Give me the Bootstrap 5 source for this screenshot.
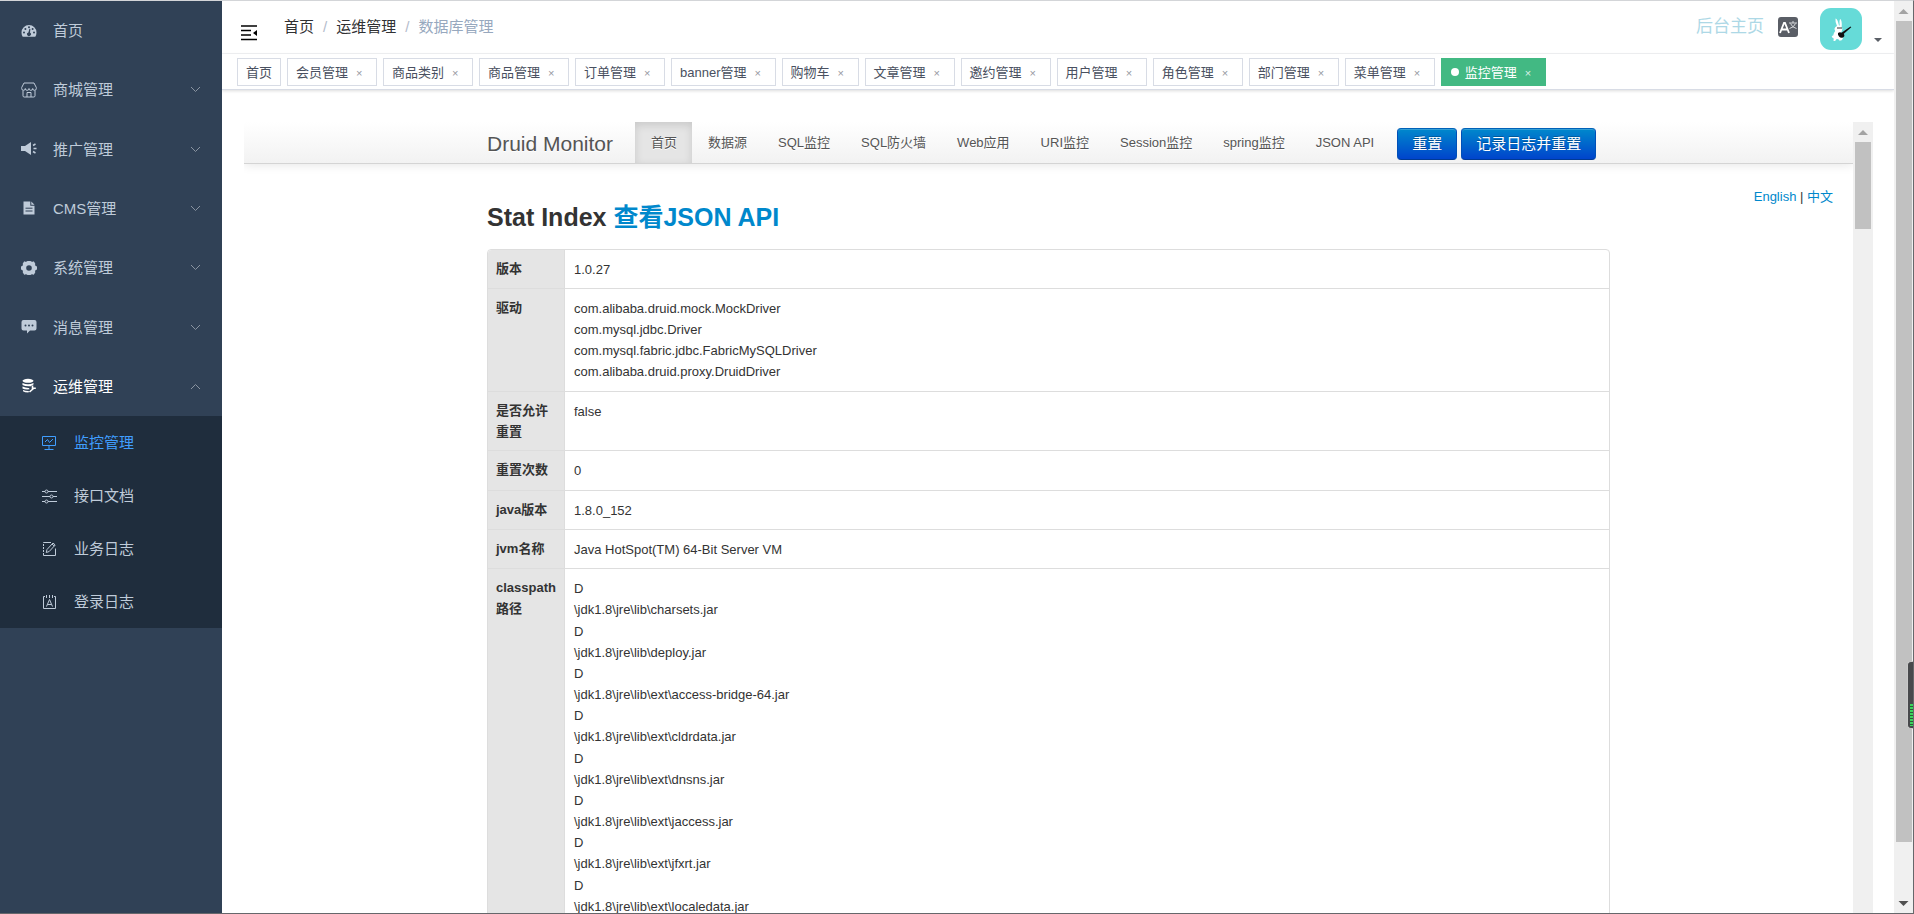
<!DOCTYPE html>
<html lang="zh-CN">
<head>
<meta charset="utf-8">
<meta name="viewport" content="width=device-width, initial-scale=1">
<title>监控管理</title>
<link href="https://cdn.jsdelivr.net/npm/bootstrap@5.3.0/dist/css/bootstrap.min.css" rel="stylesheet">
<style>
body{font-family:"Liberation Sans","Noto Sans CJK SC",sans-serif;font-size:13px;line-height:21px;color:#333;background:#fff}
a{text-decoration:none;color:#08c}
svg{display:block;flex:none}
.window-frame{border-top:1px solid #d3d5d8;border-right:1px solid #66676b;border-bottom:1px solid #66676b}
/* sidebar */
.side{width:222px;background:#304156;font-size:15px}
.side-main{display:grid;grid-template-rows:repeat(7,1fr);height:415px}
.side a{color:#bfcbd9;padding-left:21px;padding-right:21px}
.side a .ico{width:16px;margin-right:16px}
.side a.open{color:#fff}
.side .arrow{margin-left:auto;color:#8a94a1}
.side-sub{background:#1f2d3d}
.side-sub a{height:53px;padding-left:41px}
.side-sub a .ico{margin-right:17px}
.side-sub a.active{color:#409eff}
/* top bar */
.topbar{height:53px;border-bottom:1px solid #f2f3f5;padding-left:18px;padding-right:8px}
.toggle{margin-top:12px;margin-right:26px}
.crumbs{font-size:15px;padding-bottom:2px;--bs-breadcrumb-divider:"/";--bs-breadcrumb-divider-color:#b4bccc}
.crumbs a{color:#303133}
.crumbs .breadcrumb-item+.breadcrumb-item{padding-left:9px}
.crumbs .breadcrumb-item+.breadcrumb-item::before{padding-right:9px}
.crumbs .breadcrumb-item.active{color:#97a8be}
.home-link{font-size:17px;color:#add8e6;margin-right:14px;padding-bottom:2px}
.lang-btn{margin-right:22px}
.user-btn{padding-top:4px}
/* tags */
.tagbar{height:36px;padding:4px 15px 0;gap:6px;border-bottom:1px solid #d8dce5;box-shadow:0 1px 3px rgba(0,0,0,.14)}
.tag-item{height:28px;border:1px solid #d8dce5;color:#495060;padding:0 8px;white-space:nowrap}
.tag-item .x{width:20px;padding-left:8px;font-size:11px;color:#96999f;padding-top:2px}
.tag-item.active{background:#42b983;border-color:#42b983;color:#fff}
.tag-item.active .x{color:#d9f1e6}
.tag-item .dot{width:8px;height:8px;background:#fff;border-radius:50%;margin:0 6px 0 1px}
/* embedded monitor */
.stage{padding:32px 21px 0 22px;min-height:0}
.d-bar{height:42px;background:linear-gradient(#fff,#f2f2f2);border-bottom:1px solid #d4d4d4;box-shadow:0 1px 10px rgba(0,0,0,.1)}
.d-wrap{max-width:1123px;margin:0 auto}
.d-brand{font-size:21px;line-height:43px;height:41px;color:#555;text-shadow:0 1px 0 #fff;padding-right:22px}
.d-nav a{color:#555;text-shadow:0 1px 0 #fff;padding:0 15px 0 16px;line-height:41px;height:41px;display:block}
.d-nav a.active{background:#e5e5e5;box-shadow:inset 0 3px 8px rgba(0,0,0,.125)}
.d-actions{padding:6px 0 0 8px}
.d-btn{font-size:15px;line-height:20px;color:#fff;padding:5px 14px;border:1px solid;border-color:#0062b8 #0050b8 #003a94;border-radius:4px;background:linear-gradient(#08c,#04c);text-shadow:0 -1px 0 rgba(0,0,0,.25);box-shadow:inset 0 1px 0 rgba(255,255,255,.2)}
.d-content{padding-top:22px}
.d-lang{float:right;margin-right:20px}
.d-title{font-size:25px;line-height:26px;font-weight:700;margin:0 0 19px;padding-top:18px;color:#333}
.d-table{width:100%;border:1px solid #ddd;border-collapse:separate;border-spacing:0;border-radius:4px;table-layout:fixed}
.d-table th{width:77px;background:#e5e5e5;border-right:1px solid #ddd;font-weight:700}
.d-table td{padding:9px 9px 8px;vertical-align:top}
.d-table th{padding:8px;vertical-align:top}
.d-table .tall td{padding-bottom:9px}
.d-table tr+tr>*{border-top:1px solid #ddd}
.d-table tr:first-child th{border-top-left-radius:4px}
.paths li:nth-child(3n+1){margin-bottom:1px}
/* scroll rails */
.rail{width:20px;background:#f0f0f0;flex:none}
.rail .thumb{width:16px;background:#c1c1c1}
.rail-page{width:19px}
.gauge{right:0;top:660px;width:6px;height:68px;background:#48494c;border:1px solid #c9c9c9;border-right:0;border-radius:4px 0 0 4px;padding:42px 0 2px 2px}
.gauge i{display:block;height:100%;background:repeating-linear-gradient(#3bd45c 0 2px,#2d5a38 2px 3px)}
</style>
</head>
<body class="vh-100 overflow-hidden">
<div class="window-frame d-flex h-100 position-relative">

<nav class="side flex-shrink-0" aria-label="主菜单">
  <div class="side-main">
    <a href="#" class="d-flex align-items-center"><svg class="ico" width="16" height="16" viewBox="0 0 16 16"><path fill="currentColor" d="M8 2a7.5 7.5 0 0 0-7.5 7.500q0 2.500 1.200 4.300h12.600q1.200-1.800 1.200-4.300A7.500 7.500 0 0 0 8 2z"/><g fill="#304156"><circle cx="3" cy="9.500" r="1"/><circle cx="4.400" cy="6" r="1"/><circle cx="8" cy="4.300" r="1"/><circle cx="11.600" cy="6" r="1"/><circle cx="13" cy="9.500" r="1"/><path d="M8.400 5.800l1 .2-.4 3.600a1.900 1.900 0 1 1-1.600-.2z"/></g></svg>首页</a>
    <a href="#" class="d-flex align-items-center"><svg class="ico" width="16" height="16" viewBox="0 0 16 16" fill="none" stroke="currentColor"><path d="M3 1h10l2.300 4.500v1a1.800 1.800 0 0 1-3.600 0 1.800 1.800 0 0 1-3.700 0 1.800 1.800 0 0 1-3.700 0 1.800 1.800 0 0 1-3.600 0v-1zM2 8.500v5.300q0 1.200 1.200 1.200h9.600q1.200 0 1.200-1.200V8.500M6 15v-4.500h4V15"/></svg>商城管理<svg class="arrow" width="11" height="11" viewBox="0 0 11 11" fill="none" stroke="currentColor"><path d="M1 3l4.500 4.500L10 3"/></svg></a>
    <a href="#" class="d-flex align-items-center"><svg class="ico" width="16" height="16" viewBox="0 0 16 16"><path fill="currentColor" d="M0 5h4l6-4v13l-6-4H0z"/><path d="M12 4.500l2.500-1.500M12.500 7.500H15.500M12 10.500l2.500 1.500" stroke="currentColor" stroke-width="1.500"/></svg>推广管理<svg class="arrow" width="11" height="11" viewBox="0 0 11 11" fill="none" stroke="currentColor"><path d="M1 3l4.500 4.500L10 3"/></svg></a>
    <a href="#" class="d-flex align-items-center"><svg class="ico" width="16" height="16" viewBox="0 0 16 16"><path fill="currentColor" d="M2.500 1.500h6.800v4.200h4.200V14.500h-11zM10.300 1.500l3.200 3.200h-3.200z"/><path d="M4.500 8.200h7M4.500 11h7" stroke="#304156"/></svg>CMS管理<svg class="arrow" width="11" height="11" viewBox="0 0 11 11" fill="none" stroke="currentColor"><path d="M1 3l4.500 4.500L10 3"/></svg></a>
    <a href="#" class="d-flex align-items-center"><svg class="ico" width="16" height="16" viewBox="0 0 16 16"><path fill="currentColor" fill-rule="evenodd" d="M3.200 1.200q2 1.200 3.300-.2h3q1.300 1.400 3.300.2l1.500 2.600q-.9 2 1.700 2.800v2.800q-2.600.8-1.700 2.800l-1.500 2.600q-2-1.200-3.300.2h-3q-1.300-1.400-3.300-.2l-1.500-2.600q.9-2-1.700-2.800V6.600q2.600-.8 1.700-2.800zM8 5.200a2.800 2.800 0 1 0 0 5.600 2.800 2.800 0 0 0 0-5.600z"/></svg>系统管理<svg class="arrow" width="11" height="11" viewBox="0 0 11 11" fill="none" stroke="currentColor"><path d="M1 3l4.500 4.500L10 3"/></svg></a>
    <a href="#" class="d-flex align-items-center"><svg class="ico" width="16" height="16" viewBox="0 0 16 16"><path fill="currentColor" d="M2.500 1h11q2 0 2 2v6.500q0 2-2 2H9l-3 3v-3H2.500q-2 0-2-2V3q0-2 2-2z"/><g fill="#304156"><circle cx="4.500" cy="6.500" r="1"/><circle cx="8" cy="6.500" r="1"/><circle cx="11.500" cy="6.500" r="1"/></g></svg>消息管理<svg class="arrow" width="11" height="11" viewBox="0 0 11 11" fill="none" stroke="currentColor"><path d="M1 3l4.500 4.500L10 3"/></svg></a>
    <a href="#" class="open d-flex align-items-center"><svg class="ico" width="16" height="16" viewBox="0 0 16 16"><g fill="currentColor"><ellipse cx="7" cy="2.800" rx="5.500" ry="2"/><path d="M1.500 5q5.500 2.500 11 0v1.400q-2 .6-2.500 1.800-6 .3-8.500-1.300zM1.500 8.600q3 1.400 6.500 1.300l.6 1.400q-4.600.5-7.100-.9zM2 12q3 1.200 6 1l-.5 1.400q-4 0-5.500-1.200z"/></g><path d="M8.500 14l4-3.500M11.500 7.500v2.800h3.300" fill="none" stroke="currentColor" stroke-width="1.600"/></svg>运维管理<svg class="arrow" width="11" height="11" viewBox="0 0 11 11" fill="none" stroke="currentColor"><path d="M1 8l4.500-4.500L10 8"/></svg></a>
  </div>
  <div class="side-sub">
    <a href="#" class="active d-flex align-items-center"><svg class="ico" width="16" height="16" viewBox="0 0 16 16" fill="none" stroke="currentColor"><path d="M1.500 1.500h13v9h-13zM8 10.500v3.500M3.500 14.500h9M4 7l2.500-2.500L8.500 7.500 12 4"/></svg>监控管理</a>
    <a href="#" class="d-flex align-items-center"><svg class="ico" width="16" height="16" viewBox="0 0 16 16" fill="none" stroke="currentColor"><path d="M1 3.500h3M7 3.500h9M1 8.500h8M12 8.500h4M1 13.500h3M7 13.500h9"/><circle cx="5.500" cy="3.500" r="1.500"/><circle cx="10.500" cy="8.500" r="1.500"/><circle cx="5.500" cy="13.500" r="1.500"/></svg>接口文档</a>
    <a href="#" class="d-flex align-items-center"><svg class="ico" width="16" height="16" viewBox="0 0 16 16" fill="none" stroke="currentColor"><path d="M10 1.500H2.500v13h12V7.500" /><path d="M2.500 2v12" stroke="#1f2d3d" stroke-dasharray="1 2"/><path d="M6 8.500l6-6.500 2.200 2-6 6.500-3 1zM11 3l2.200 2"/></svg>业务日志</a>
    <a href="#" class="d-flex align-items-center"><svg class="ico" width="16" height="16" viewBox="0 0 16 16" fill="none" stroke="currentColor"><path d="M4 2.500H2.500v12h12v-12H13M5.500 1v3M8.500 1v3M11.500 1v3M5.500 12.500l3-7 3 7M6.500 10.500h4"/></svg>登录日志</a>
  </div>
</nav>

<div class="flex-fill d-flex flex-column overflow-hidden">
  <header class="topbar d-flex align-items-center flex-shrink-0">
    <button type="button" class="toggle btn p-0 border-0" aria-label="折叠菜单"><svg width="18" height="16" viewBox="0 0 18 16"><path d="M1 1h16M1 5.500h10M1 10h10M1 14.500h16" stroke="#000" stroke-width="1.500"/><path d="M17 5v6l-4-3z"/></svg></button>
    <ol class="crumbs breadcrumb mb-0">
      <li class="breadcrumb-item"><a href="#">首页</a></li>
      <li class="breadcrumb-item"><a href="#">运维管理</a></li>
      <li class="breadcrumb-item active">数据库管理</li>
    </ol>
    <a href="#" class="home-link ms-auto">后台主页</a>
    <button type="button" class="lang-btn btn p-0 border-0" aria-label="语言"><svg width="20" height="20" viewBox="0 0 20 20"><rect width="20" height="20" rx="3" fill="#5a5e66"/><path d="M2 16L6 6h1l4 10M3.500 12.500h6" fill="none" stroke="#fff" stroke-width="1.800"/><path d="M11 6h8M15 4v2M12.500 6.500q1.500 4 6 5M17.500 6.500q-1.500 4-6 5" fill="none" stroke="#d5d7da"/></svg></button>
    <button type="button" class="user-btn btn px-0 pb-0 border-0 d-flex align-items-end" aria-label="用户">
      <svg width="42" height="42" viewBox="0 0 42 42"><rect width="42" height="42" rx="11" fill="#66dbd8"/><path d="M15.500 10.500q2 0 3.500 7h.8q-.8-5 .4-6.500 2 1.500 1.500 8 1.500 2 0 4.500l-1 1q3 3 2 6.500l-1.500 1.500h-2l-1-1.500-2 .2-1 1.800h-1.700l.2-2.500q-2-1-2-2.500l1.500-.5q.5-3 2-4.500-2-3 1.800-5-2-3.500-1.500-7.500z" fill="#fff"/><path d="M17 20h5" stroke="#333"/><path d="M18 25q2-1.500 3.500-.2l9-6.300.8.700-7.500 6.600q1.500 2.600-.8 3.700-2.500.8-4-1-1.500-1.700-1-3.500z" fill="#111"/></svg>
      <svg class="ms-2" width="16" height="16" viewBox="0 0 16 16"><path d="M4 4h8L8 8z" fill="#5a5e66"/></svg>
    </button>
  </header>

  <div class="tagbar d-flex flex-shrink-0">
    <a href="#" class="tag-item d-flex align-items-center">首页</a>
    <a href="#" class="tag-item d-flex align-items-center">会员管理<span class="x">×</span></a>
    <a href="#" class="tag-item d-flex align-items-center">商品类别<span class="x">×</span></a>
    <a href="#" class="tag-item d-flex align-items-center">商品管理<span class="x">×</span></a>
    <a href="#" class="tag-item d-flex align-items-center">订单管理<span class="x">×</span></a>
    <a href="#" class="tag-item d-flex align-items-center">banner管理<span class="x">×</span></a>
    <a href="#" class="tag-item d-flex align-items-center">购物车<span class="x">×</span></a>
    <a href="#" class="tag-item d-flex align-items-center">文章管理<span class="x">×</span></a>
    <a href="#" class="tag-item d-flex align-items-center">邀约管理<span class="x">×</span></a>
    <a href="#" class="tag-item d-flex align-items-center">用户管理<span class="x">×</span></a>
    <a href="#" class="tag-item d-flex align-items-center">角色管理<span class="x">×</span></a>
    <a href="#" class="tag-item d-flex align-items-center">部门管理<span class="x">×</span></a>
    <a href="#" class="tag-item d-flex align-items-center">菜单管理<span class="x">×</span></a>
    <a href="#" class="tag-item active d-flex align-items-center"><span class="dot"></span>监控管理<span class="x">×</span></a>
  </div>

  <main class="stage flex-fill d-flex">
    <div class="flex-fill overflow-hidden">
      <div class="d-bar">
        <div class="d-wrap d-flex align-items-start">
          <a href="#" class="d-brand">Druid Monitor</a>
          <nav class="d-nav d-flex">
            <a href="#" class="active">首页</a>
            <a href="#">数据源</a>
            <a href="#">SQL监控</a>
            <a href="#">SQL防火墙</a>
            <a href="#">Web应用</a>
            <a href="#">URI监控</a>
            <a href="#">Session监控</a>
            <a href="#">spring监控</a>
            <a href="#">JSON API</a>
          </nav>
          <div class="d-actions d-flex gap-1">
            <button type="button" class="d-btn">重置</button>
            <button type="button" class="d-btn">记录日志并重置</button>
          </div>
        </div>
      </div>
      <div class="d-content">
        <div class="d-lang"><a href="#">English</a> | <a href="#">中文</a></div>
        <div class="d-wrap">
          <h3 class="d-title">Stat Index <a href="#">查看JSON API</a></h3>
          <table class="d-table">
            <tbody>
            <tr><th scope="row">版本</th><td>1.0.27</td></tr>
            <tr class="tall"><th scope="row">驱动</th><td>com.alibaba.druid.mock.MockDriver<br>com.mysql.jdbc.Driver<br>com.mysql.fabric.jdbc.FabricMySQLDriver<br>com.alibaba.druid.proxy.DruidDriver</td></tr>
            <tr class="tall"><th scope="row">是否允许重置</th><td>false</td></tr>
            <tr class="tall"><th scope="row">重置次数</th><td>0</td></tr>
            <tr><th scope="row">java版本</th><td>1.8.0_152</td></tr>
            <tr><th scope="row">jvm名称</th><td>Java HotSpot(TM) 64-Bit Server VM</td></tr>
            <tr><th scope="row">classpath路径</th><td><ul class="paths list-unstyled mb-0">
              <li>D<br>\jdk1.8\jre\lib\charsets.jar</li>
              <li>D<br>\jdk1.8\jre\lib\deploy.jar</li>
              <li>D<br>\jdk1.8\jre\lib\ext\access-bridge-64.jar</li>
              <li>D<br>\jdk1.8\jre\lib\ext\cldrdata.jar</li>
              <li>D<br>\jdk1.8\jre\lib\ext\dnsns.jar</li>
              <li>D<br>\jdk1.8\jre\lib\ext\jaccess.jar</li>
              <li>D<br>\jdk1.8\jre\lib\ext\jfxrt.jar</li>
              <li>D<br>\jdk1.8\jre\lib\ext\localedata.jar</li>
            </ul></td></tr>
            </tbody>
          </table>
        </div>
      </div>
    </div>
    <div class="rail d-flex flex-column align-items-center" aria-hidden="true">
      <svg width="20" height="20" viewBox="0 0 20 20"><path d="M5 13h10l-5-5z" fill="#a3a3a3"/></svg>
      <div class="thumb" style="height:87px"></div>
    </div>
  </main>
</div>

<div class="rail rail-page d-flex flex-column align-items-center" aria-hidden="true">
  <svg width="19" height="20" viewBox="0 0 19 20"><path d="M4.500 13h10l-5-5z" fill="#a3a3a3"/></svg>
  <div class="thumb" style="height:90%"></div>
  <svg class="mt-auto" width="19" height="20" viewBox="0 0 19 20"><path d="M4.500 8h10l-5 5z" fill="#505050"/></svg>
</div>
<div class="gauge position-absolute" aria-hidden="true"><i></i></div>
</div>
<script src="https://cdn.jsdelivr.net/npm/bootstrap@5.3.0/dist/js/bootstrap.bundle.min.js"></script>
</body>
</html>
